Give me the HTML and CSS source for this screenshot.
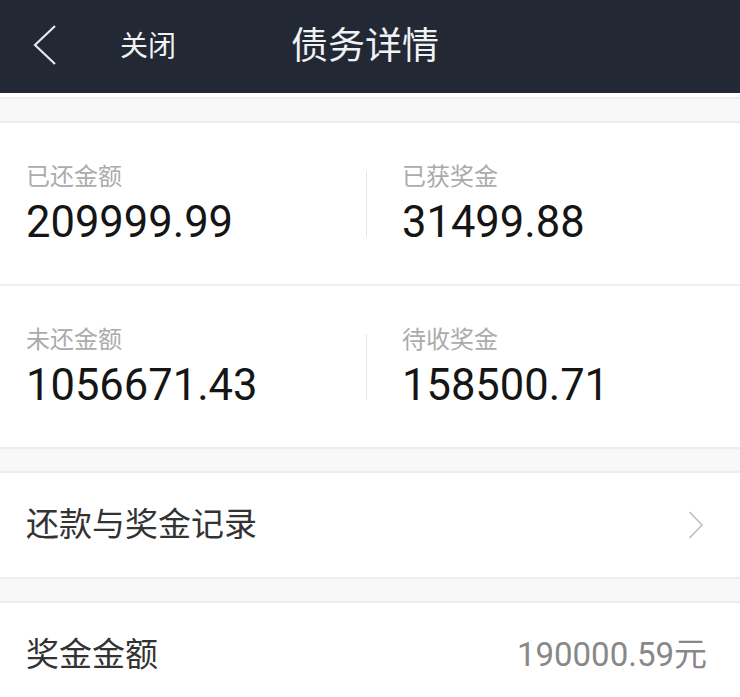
FILE: index.html
```html
<!DOCTYPE html>
<html lang="zh-CN">
<head>
<meta charset="utf-8">
<title>债务详情</title>
<link rel="stylesheet" href="styles.css">
</head>
<body>
<header class="topbar">
  <svg class="back" width="24" height="42" viewBox="0 0 24 42" aria-hidden="true">
    <polyline points="22,2 2,21 22,40" fill="none" stroke="#e6e8ea" stroke-width="2.2" stroke-linejoin="miter"/>
  </svg>
  <span class="close">关闭</span>
  <span class="title">债务详情</span>
</header>

<div class="band first"></div>

<section class="stats">
  <div class="stat-row">
    <div class="cell">
      <div class="label">已还金额</div>
      <div class="num">209999.99</div>
    </div>
    <div class="vline"></div>
    <div class="cell right">
      <div class="label">已获奖金</div>
      <div class="num">31499.88</div>
    </div>
  </div>
  <div class="stat-row last">
    <div class="cell">
      <div class="label">未还金额</div>
      <div class="num">1056671.43</div>
    </div>
    <div class="vline"></div>
    <div class="cell right">
      <div class="label">待收奖金</div>
      <div class="num">158500.71</div>
    </div>
  </div>
</section>

<div class="band"></div>

<div class="list-row">
  <span class="row-title">还款与奖金记录</span>
  <svg class="arrow" width="16" height="28" viewBox="0 0 16 28" aria-hidden="true">
    <polyline points="1.5,1 14,14 1.5,27" fill="none" stroke="#bdbdbd" stroke-width="1.6"/>
  </svg>
</div>

<div class="band"></div>

<div class="list-row value-row">
  <span class="row-title">奖金金额</span>
  <span class="row-value">190000.59元</span>
</div>
</body>
</html>
```

FILE: styles.css
```css
* { box-sizing: border-box; }

html, body {
  margin: 0;
  padding: 0;
  background: #ffffff;
  font-family: Roboto, "Noto Sans CJK SC", sans-serif;
}

.topbar {
  height: 93px;
  background: #222834;
  display: flex;
  align-items: center;
  padding-left: 33px;
  color: #f1f2f3;
}

.back {
  display: block;
  margin-top: -4px;
  flex: none;
}

.close {
  margin-left: 63px;
  font-size: 28px;
  line-height: 40px;
}

.title {
  margin-left: 115px;
  font-size: 37px;
  line-height: 50px;
}

.band {
  height: 26px;
  background: #f8f8f8;
  border-top: 2px solid #ededed;
  border-bottom: 2px solid #ededed;
}

.band.first {
  margin-top: 4px;
}

.stat-row {
  display: flex;
  align-items: flex-start;
  height: 163px;
  border-bottom: 2px solid #eeeeee;
}

.stat-row.last {
  height: 161px;
  border-bottom: none;
}

.cell {
  padding-top: 38px;
  padding-left: 26px;
  width: 366px;
  flex: none;
}

.cell.right {
  width: auto;
  flex: 1;
  padding-left: 35px;
}

.vline {
  width: 1px;
  height: 66px;
  background: #e6e6e6;
  align-self: center;
  flex: none;
}

.label {
  font-size: 24px;
  line-height: 32px;
  color: #ababab;
  margin-bottom: 4px;
}

.num {
  font-size: 43.5px;
  line-height: 52px;
  color: #151515;
}

.list-row {
  height: 104px;
  display: flex;
  align-items: center;
  justify-content: space-between;
  padding-left: 26px;
  padding-right: 36px;
}

.value-row {
  padding-right: 33px;
}

.row-title {
  font-size: 33px;
  line-height: 44px;
  color: #333333;
}

.arrow {
  display: block;
  flex: none;
}

.row-value {
  font-size: 33px;
  line-height: 44px;
  color: #888888;
}
```
